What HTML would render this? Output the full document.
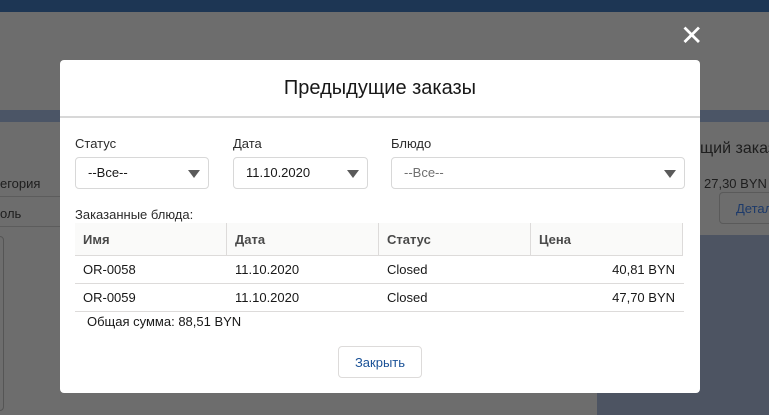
<!DOCTYPE html>
<html style="width:769px;height:415px;overflow:hidden"><head><meta charset="utf-8"><style>
*{box-sizing:border-box;margin:0;padding:0}
body{width:769px;height:415px;overflow:hidden;background:#6d6d6d;font-family:"Liberation Sans",sans-serif;position:relative;color:#181818}
.abs{position:absolute;white-space:nowrap}
.sel{position:absolute;top:157px;height:32px;border:1px solid #d8d8d8;border-radius:4px;background:#fff;font-size:13px;padding:7px 0 0 12px}
.sel:after{content:"";position:absolute;right:8px;top:12px;border-left:6px solid transparent;border-right:6px solid transparent;border-top:8px solid #5a5a5a}
.lbl{position:absolute;top:136px;font-size:13px;color:#2b2b2b}
.th,.td{position:absolute;font-size:13px}
</style></head><body>
<div class="abs" style="left:0;top:0;width:769px;height:12px;background:#1d3654"></div>
<div class="abs" style="left:0;top:110px;width:769px;height:12px;background:#4b5566"></div>
<div class="abs" style="left:0;top:196px;width:60px;height:1px;background:#5c5c5c"></div>
<div class="abs" style="left:0;top:226px;width:60px;height:1px;background:#5c5c5c"></div>
<div class="abs" style="left:-10px;top:236px;width:14px;height:175px;border:1px solid #555;border-radius:4px"></div>
<div class="abs" style="left:0;top:176px;font-size:13px;color:#1e1e1e">егория</div>
<div class="abs" style="left:0;top:206px;font-size:13px;color:#1e1e1e">оль</div>
<div class="abs" style="left:597px;top:235px;width:172px;height:180px;background:#4d5462"></div>
<div class="abs" style="left:700px;top:140px;font-size:16px;color:#1e1e1e">щий заказ</div>
<div class="abs" style="left:704px;top:176px;font-size:13px;color:#1e1e1e">27,30 BYN</div>
<div class="abs" style="left:719px;top:192px;width:60px;height:32px;border:1px solid #5a5a5a;border-radius:4px;font-size:13px;color:#1d3a6a;padding:8px 0 0 16px;overflow:hidden">Детали</div>
<div class="abs" style="left:680px;top:22px;font-size:28px;color:#fff;line-height:28px">✕</div>
<div class="abs" style="left:60px;top:60px;width:640px;height:333px;background:#fff;border-radius:4px">
<div class="abs" style="left:0;top:0;width:640px;height:58px;border-bottom:2px solid #d8d8d8;text-align:center;font-size:20px;padding-top:17px;color:#181818">Предыдущие заказы</div>
</div>
<div class="lbl" style="left:75px">Статус</div>
<div class="lbl" style="left:233px">Дата</div>
<div class="lbl" style="left:391px">Блюдо</div>
<div class="sel" style="left:75px;width:134px;color:#181818">--Все--</div>
<div class="sel" style="left:233px;width:135px;color:#181818">11.10.2020</div>
<div class="sel" style="left:391px;width:294px;color:#707070">--Все--</div>
<div class="abs" style="left:75px;top:207px;font-size:13px;color:#2b2b2b">Заказанные блюда:</div>
<div class="abs" style="left:75px;top:223px;width:608px;height:33px;background:#fafaf9;border-bottom:1px solid #dddbda"></div>
<div class="abs" style="left:226px;top:223px;width:1px;height:33px;background:#dddbda"></div>
<div class="abs" style="left:378px;top:223px;width:1px;height:33px;background:#dddbda"></div>
<div class="abs" style="left:530px;top:223px;width:1px;height:33px;background:#dddbda"></div>
<div class="abs" style="left:682px;top:223px;width:1px;height:33px;background:#dddbda"></div>
<div class="th" style="left:83px;top:232px;font-weight:bold;color:#4a4a4a">Имя</div>
<div class="th" style="left:235px;top:232px;font-weight:bold;color:#4a4a4a">Дата</div>
<div class="th" style="left:387px;top:232px;font-weight:bold;color:#4a4a4a">Статус</div>
<div class="th" style="left:539px;top:232px;font-weight:bold;color:#4a4a4a">Цена</div>
<div class="abs" style="left:75px;top:283px;width:609px;height:1px;background:#dddbda"></div>
<div class="abs" style="left:75px;top:311px;width:609px;height:1px;background:#dddbda"></div>
<div class="td" style="left:83px;top:262px">OR-0058</div>
<div class="td" style="left:235px;top:262px">11.10.2020</div>
<div class="td" style="left:387px;top:262px">Closed</div>
<div class="td" style="right:94px;top:262px">40,81 BYN</div>
<div class="td" style="left:83px;top:290px">OR-0059</div>
<div class="td" style="left:235px;top:290px">11.10.2020</div>
<div class="td" style="left:387px;top:290px">Closed</div>
<div class="td" style="right:94px;top:290px">47,70 BYN</div>
<div class="td" style="left:87px;top:314px">Общая сумма: 88,51 BYN</div>
<div class="abs" style="left:338px;top:346px;width:84px;height:32px;border:1px solid #dddbda;border-radius:4px;font-size:13px;color:#1b5297;text-align:center;padding-top:8px">Закрыть</div>
</body></html>
